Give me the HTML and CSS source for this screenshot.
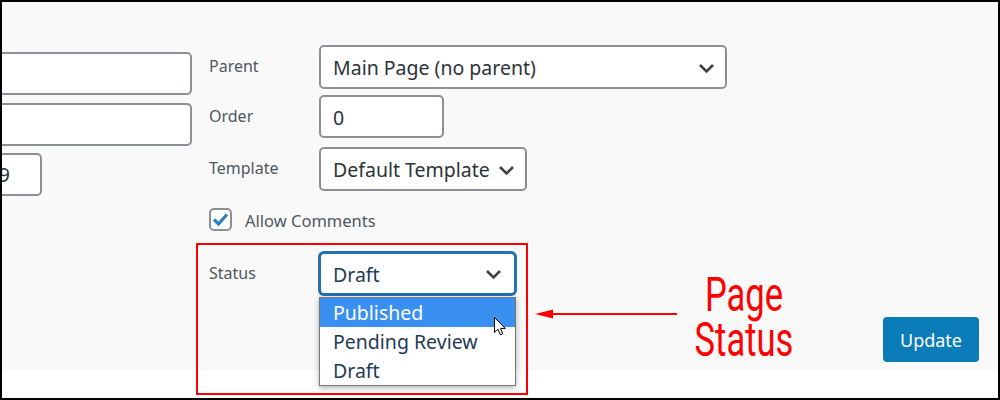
FILE: index.html
```html
<!DOCTYPE html>
<html lang="en">
<head>
  <meta charset="UTF-8">
  <meta name="viewport" content="width=device-width, initial-scale=1.0">
  <title>Page Attributes</title>
  <link rel="stylesheet" href="styles.css">
</head>
<body>
  <div class="screen">
    <div class="panel">
      <div class="left-col">
        <div class="field-box wide"></div>
        <div class="field-box wide"></div>
        <div class="field-box short">2019</div>
      </div>

      <div class="fields">
        <div class="row row-parent">
          <div class="label">Parent</div>
          <div class="select select-parent">
            <span>Main Page (no parent)</span>
            <svg class="chevron" width="17" height="11" viewBox="0 0 17 11"><path d="M2 2 L8.5 8.5 L15 2" fill="none" stroke="#3c434a" stroke-width="2.6"/></svg>
          </div>
        </div>
        <div class="row row-order">
          <div class="label">Order</div>
          <div class="select select-order"><span>0</span></div>
        </div>
        <div class="row row-template">
          <div class="label">Template</div>
          <div class="select select-template">
            <span>Default Template</span>
            <svg class="chevron" width="17" height="11" viewBox="0 0 17 11"><path d="M2 2 L8.5 8.5 L15 2" fill="none" stroke="#3c434a" stroke-width="2.6"/></svg>
          </div>
        </div>
        <div class="row row-check">
          <span class="checkbox">
            <svg width="17" height="15" viewBox="0 0 17 15"><path d="M2 7.5 L6.5 12 L15 2.5" fill="none" stroke="#2680c2" stroke-width="3.2"/></svg>
          </span>
          <span class="check-label">Allow Comments</span>
        </div>
        <div class="row row-status">
          <div class="label">Status</div>
          <div class="status-wrap">
            <div class="select select-status">
              <span>Draft</span>
              <svg class="chevron" width="17" height="11" viewBox="0 0 17 11"><path d="M2 2 L8.5 8.5 L15 2" fill="none" stroke="#3c434a" stroke-width="2.6"/></svg>
            </div>
            <ul class="dropdown">
              <li class="option active">Published</li>
              <li class="option">Pending Review</li>
              <li class="option">Draft</li>
            </ul>
          </div>
        </div>
      </div>

      <div class="actions">
        <button class="btn-update">Update</button>
      </div>
    </div>
    <div class="footer"></div>

    <!-- annotation -->
    <div class="callout-box"></div>
    <svg class="callout-arrow" width="143" height="12" viewBox="0 0 143 12">
      <path d="M0 6 L18 1.5 L18 10.5 Z" fill="#f00"/>
      <line x1="16" y1="6" x2="142" y2="6" stroke="#f00" stroke-width="2"/>
    </svg>
    <div class="callout-text">Page<br>Status</div>

    <svg class="cursor" width="13" height="19" viewBox="0 0 13 19">
      <path d="M0.5 0.5 L0.5 15.5 L4 12.2 L6.4 17.8 L8.8 16.8 L6.5 11.4 L11.3 11.4 Z" fill="#fff" stroke="#000" stroke-width="1" stroke-linejoin="round"/>
    </svg>
  </div>
</body>
</html>
```

FILE: styles.css
```css
html, body {
  margin: 0;
  padding: 0;
}
body {
  font-family: "Noto Sans", "Open Sans", sans-serif;
  background: #fff;
}
.screen {
  position: relative;
  width: 1000px;
  height: 400px;
  box-sizing: border-box;
  border: 2px solid #000;
  overflow: hidden;
}
.panel {
  height: 368px;
  background: #f9f9f9;
  display: flex;
}
.footer {
  height: 28px;
  background: #fff;
}

/* left column, cut off by the screen edge */
.left-col {
  width: 190px;
  flex-shrink: 0;
  display: flex;
  flex-direction: column;
  align-items: flex-end;
  padding-top: 50px;
}
.field-box {
  height: 43px;
  box-sizing: border-box;
  background: #fff;
  border: 2px solid #8c8f94;
  border-radius: 5px;
  font-size: 19.5px;
  color: #2c3338;
}
.field-box.wide {
  width: 300px;
  flex-shrink: 0;
  margin-bottom: 8px;
}
.field-box.wide + .field-box.wide {
  margin-bottom: 7px;
}
.field-box.short {
  align-self: flex-start;
  width: 80px;
  margin-left: -40px;
  display: flex;
  align-items: center;
  justify-content: flex-end;
  padding-right: 30px;
  box-sizing: border-box;
}

/* main fields */
.fields {
  margin-left: 17px;
  padding-top: 43px;
}
.row {
  display: flex;
  align-items: flex-start;
}
.row-parent { margin-bottom: 6px; }
.row-order { margin-bottom: 9px; }
.row-template { margin-bottom: 17px; }
.row-check {
  height: 23px;
  margin-bottom: 21px;
  align-items: center;
}

.label {
  width: 110px;
  flex-shrink: 0;
  font-size: 16px;
  line-height: 22px;
  padding-top: 10px;
  color: #50575e;
}
.select {
  box-sizing: border-box;
  height: 44px;
  background: #fff;
  border: 2px solid #8c8f94;
  border-radius: 5px;
  display: flex;
  align-items: center;
  justify-content: space-between;
  padding: 2px 10px 0 12px;
  font-size: 19.5px;
  line-height: 26px;
  color: #2c3338;
}
.select-parent { width: 408px; }
.select-order { width: 125px; height: 43px; }
.select-template { width: 208px; }

.checkbox {
  width: 23px;
  height: 23px;
  box-sizing: border-box;
  border: 2px solid #8c8f94;
  border-radius: 5px;
  background: #fff;
  display: flex;
  align-items: center;
  justify-content: center;
}
.check-label {
  margin-left: 13px;
  padding-top: 3px;
  line-height: 22px;
  font-size: 16.5px;
  color: #50575e;
}

.status-wrap {
  position: relative;
}
.select-status {
  width: 197px;
  height: 43px;
  border-color: #2271b1;
  box-shadow: 0 0 0 1px #2271b1;
  color: #1f3a56;
  padding-right: 12px;
}
.dropdown {
  position: absolute;
  left: 0;
  top: 100%;
  margin: 2px 0 0;
  padding: 0;
  list-style: none;
  width: 197px;
  box-sizing: border-box;
  background: #fff;
  border: 1px solid #767676;
  box-shadow: 0 2px 6px rgba(0, 0, 0, 0.3);
}
.option {
  height: 29px;
  line-height: 29px;
  padding-left: 13px;
  font-size: 19.5px;
  color: #1f3a56;
}
.option.active {
  background: #3990f0;
  color: #fff;
}

.actions {
  margin-left: auto;
  align-self: flex-end;
  padding: 0 19px 8px 0;
}
.btn-update {
  width: 96px;
  height: 45px;
  border: none;
  border-radius: 4px;
  background: #0a7cb9;
  color: #fff;
  font-family: "Noto Sans", "Open Sans", sans-serif;
  font-size: 18px;
  padding: 0;
}

/* annotation overlay */
.callout-box {
  position: absolute;
  left: 194px;
  top: 241px;
  width: 332px;
  height: 152px;
  box-sizing: border-box;
  border: 2px solid #f00;
}
.callout-arrow {
  position: absolute;
  left: 533px;
  top: 306px;
}
.callout-text {
  position: absolute;
  left: 672px;
  top: 270px;
  width: 140px;
  text-align: center;
  font-family: Roboto, "Liberation Sans", sans-serif;
  font-size: 48px;
  line-height: 45px;
  color: #f00;
  transform: scaleX(0.72);
}
.cursor {
  position: absolute;
  left: 492px;
  top: 315px;
}
```
